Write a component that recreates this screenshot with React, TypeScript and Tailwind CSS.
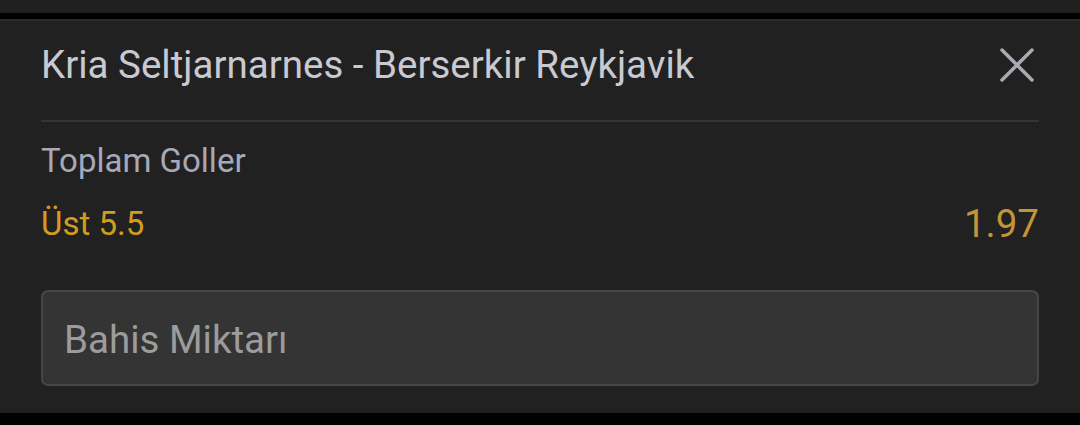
import React from "react";

export default function App() {
  return (
    <div className="w-[1080px] h-[425px] bg-black flex flex-col" style={{ fontFamily: "Roboto, 'Noto Sans', sans-serif" }}>
      <div className="h-[13px] bg-[#202020]" />
      <div className="h-[6px] bg-black" />
      <div className="h-[394px] bg-[#212121] border-t-2 border-[#2c2c2c] px-[41px] flex flex-col">
        <div className="flex items-center justify-between pt-[21px] pb-[32px]">
          <div className="text-[38.5px] leading-[46px] text-[#c9c9d1]">Kria Seltjarnarnes - Berserkir Reykjavik</div>
          <svg width="36" height="36" viewBox="0 0 36 36" className="mr-[4px]">
            <path d="M3 3 L33 33 M33 3 L3 33" stroke="#a9aab2" strokeWidth="3.5" strokeLinecap="round" />
          </svg>
        </div>
        <div className="h-[2px] bg-[#33333b]" />
        <div className="pt-[19px] text-[33px] leading-[40px] text-[#a7a8b8]">Toplam Goller</div>
        <div className="flex items-center justify-between mt-[23px] h-[40px]">
          <div className="text-[33px] leading-[40px] text-[#d29d1e]">Üst 5.5</div>
          <div className="text-[38.5px] leading-[40px] text-[#c49538]">1.97</div>
        </div>
        <div className="mt-[46px] h-[96px] rounded-[7px] border-2 border-[#464646] bg-[#343434] flex items-center px-[21px] pt-[4px]">
          <span className="text-[38.5px] text-[#9c9c9c]">Bahis Miktarı</span>
        </div>
      </div>
      <div className="flex-1 bg-black" />
    </div>
  );
}
